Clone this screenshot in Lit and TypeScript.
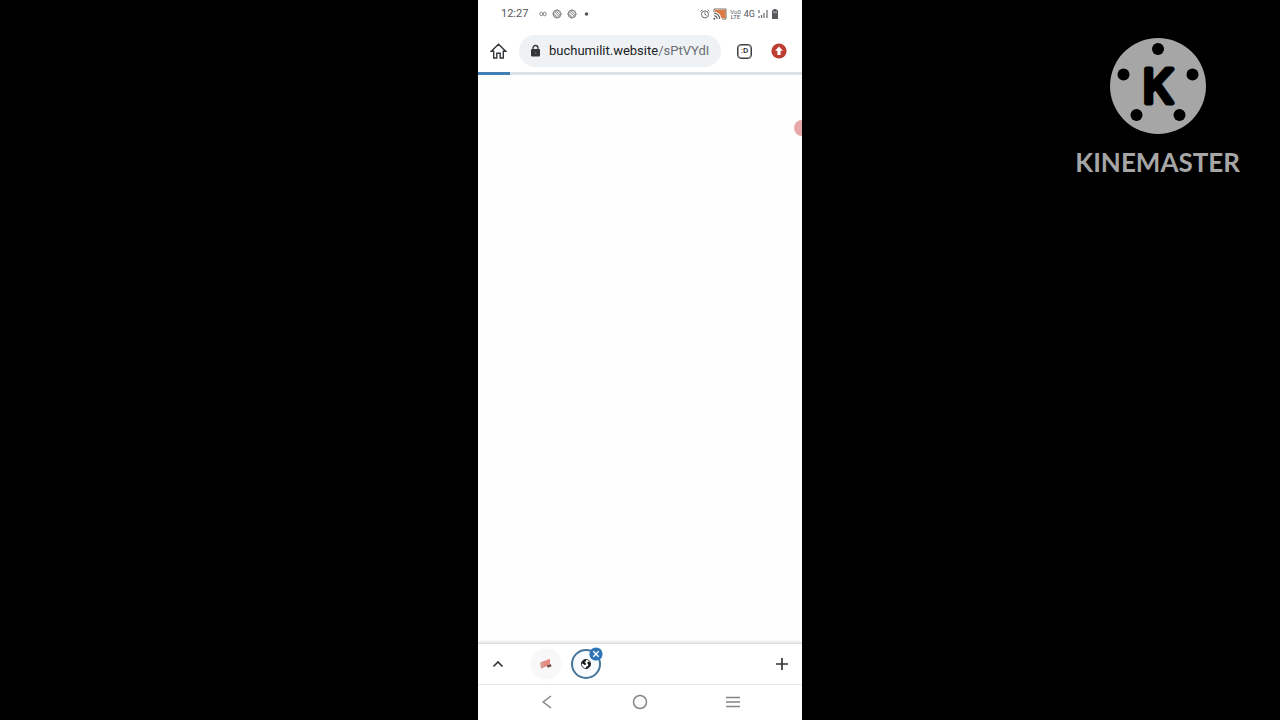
import { LitElement, html, css, svg } from "lit";
import { customElement } from "lit/decorators.js";

@customElement("status-bar")
class StatusBar extends LitElement {
  static styles = css`
    :host {
      display: flex;
      justify-content: space-between;
      align-items: center;
      height: 28px;
      padding: 0 23px;
      color: #55585b;
      font: 11px/14px Roboto, sans-serif;
    }
    .side { display: flex; align-items: center; }
    .left { gap: 5px; }
    .right { gap: 3px; }
    .clock { margin-right: 6px; }
    .volte { font-size: 6px; line-height: 5px; text-align: center; }
    .network { font-size: 9px; }
    svg { display: block; }
  `;

  private leaf() {
    return svg`<svg width="10" height="10" viewBox="0 0 10 10" fill="none" stroke="#77797b">
      <path d="M5 .6L9.400 5 5 9.400.6 5z" stroke-width=".8" stroke-linejoin="round"/>
      <circle cx="5" cy="5" r="4" stroke-width=".8"/>
      <path d="M2.500 2.700l5 5M4 1.800l4.200 4.200M1.600 4.400l4 4" stroke-width=".9"/>
    </svg>`;
  }

  render() {
    return html`
      <div class="side left">
        <span class="clock">12:27</span>
        <svg width="8" height="6" viewBox="0 0 8 6" fill="none" stroke="#85878a">
          <ellipse cx="2.300" cy="3" rx="1.500" ry="1.800"/><ellipse cx="5.700" cy="3" rx="1.500" ry="1.800"/>
        </svg>
        ${this.leaf()}${this.leaf()}
        <svg width="8" height="4" viewBox="0 0 8 4"><circle cx="4.500" cy="2" r="1.800" fill="#55585b"/></svg>
      </div>
      <div class="side right">
        <svg width="10" height="10" viewBox="0 0 10 10" fill="none" stroke="#66696b">
          <circle cx="5" cy="5.400" r="3.500"/><path d="M5 3.400v2.200l1.400.8M.6 2.400L2.400.8M9.400 2.400L7.600.8"/>
        </svg>
        <svg width="14" height="12" viewBox="0 0 14 12">
          <path d="M2 2h10.500v8H8.200C7.800 6.600 6 4.700 2 4z" fill="#e07a45"/>
          <path d="M1 4V1h12v10H9" fill="none" stroke="#806c60" stroke-width="1"/>
          <path d="M1 5.300a5.700 5.700 0 0 1 5.700 5.700M1 7.800A3.200 3.200 0 0 1 4.200 11" fill="none" stroke="#5d5d5d" stroke-width="1.100"/>
          <circle cx="1.300" cy="10.800" r="1" fill="#5d5d5d"/>
        </svg>
        <span class="volte">Vo0<br />LTE</span>
        <span class="network">4G</span>
        <svg width="10" height="10" viewBox="0 0 10 10" fill="none" stroke="#66696b" stroke-width="1.200">
          <path d="M1 1v3M1 7v2M3.500 6v3M6 4v5M9 1v8"/>
        </svg>
        <svg width="8" height="12" viewBox="0 0 8 12"><path d="M2.500 1h3v1.200H7V11H1V2.200h1.500z" fill="#56595b"/><path d="M2 3.400h4v1.800H2z" fill="#9a9c9e"/></svg>
      </div>
    `;
  }
}

@customElement("browser-toolbar")
class BrowserToolbar extends LitElement {
  static styles = css`
    :host {
      display: flex;
      align-items: center;
      height: 42px;
      padding: 2px 10px 0 7px;
    }
    button {
      display: flex;
      align-items: center;
      justify-content: center;
      flex: none;
      width: 27px;
      height: 32px;
      padding: 0;
      border: 0;
      background: none;
      font-family: Roboto, sans-serif;
      color: #202124;
    }
    .address {
      flex: 1;
      min-width: 0;
      justify-content: flex-start;
      gap: 8px;
      margin: 0 10px 0 7px;
      padding: 0 7px 0 11px;
      border-radius: 16px;
      background: #eff2f4;
      font-size: 13px;
      line-height: 20px;
    }
    .address svg { flex: none; }
    .url { flex: 1; min-width: 0; overflow: hidden; white-space: nowrap; text-align: left; }
    .path { color: #6a6e72; }
    .count {
      display: flex;
      align-items: center;
      justify-content: center;
      box-sizing: border-box;
      width: 15px;
      height: 15px;
      border: 1px solid #3c4043;
      box-shadow: inset 0 0 0 1px #9a9c9e;
      border-radius: 4px;
      font-size: 8px;
      line-height: 10px;
      font-weight: 500;
    }
    .update { margin-left: 7px; }
    svg { display: block; }
  `;

  render() {
    return html`
      <button aria-label="Home">
        <svg width="17" height="18" viewBox="0 0 17 18" fill="none" stroke="#34373a" stroke-width="1.400">
          <path d="M1.300 9.200L8.500 2.200l7.200 7H13.300V16H10.200v-4.800H6.800V16H3.700V9.200z"/>
        </svg>
      </button>
      <button class="address" aria-label="Address bar">
        <svg width="11" height="14" viewBox="0 0 11 14">
          <path d="M3 6V4a2.500 2.500 0 0 1 5 0v2" fill="none" stroke="#34373a" stroke-width="1.300"/>
          <rect x="1" y="5" width="9" height="7.500" rx="1" fill="#34373a"/>
          <circle cx="5.500" cy="8.800" r=".9" fill="#5b5f62"/>
        </svg>
        <span class="url">buchumilit.website<span class="path">/sPtVYdI</span></span>
      </button>
      <button aria-label="Open tabs"><span class="count">:D</span></button>
      <button class="update" aria-label="Update available">
        <svg width="16" height="16" viewBox="0 0 16 16">
          <circle cx="8" cy="8" r="7.600" fill="#bd3d32"/>
          <path d="M8 3.500l4 4.200H9.600V12H6.400V7.700H4z" fill="#fff"/>
        </svg>
      </button>
    `;
  }
}

@customElement("tab-strip")
class TabStrip extends LitElement {
  static styles = css`
    :host {
      position: relative;
      display: flex;
      align-items: center;
      height: 40px;
      padding: 0 6px;
      border-top: 1px solid #dcdcdc;
      box-shadow: 0 -1px 3px #dedede;
      background: #fff;
    }
    button {
      display: flex;
      align-items: center;
      justify-content: center;
      width: 28px;
      height: 32px;
      padding: 0;
      border: 0;
      background: none;
    }
    .tab { position: relative; box-sizing: border-box; width: 30px; height: 30px; border-radius: 50%; }
    .idle { margin-left: 19px; background: #f8f8f8; box-shadow: 0 0 3px #f5f5f5; }
    .active { margin-left: 10px; border: 2px solid #45759b; background: #f8fcff; }
    .close { position: absolute; top: -4px; right: -4px; }
    .new { margin-left: auto; }
    svg { display: block; }
  `;

  render() {
    return html`
      <button aria-label="Expand tabs">
        <svg width="12" height="12" viewBox="0 0 12 12" fill="none" stroke="#34373a" stroke-width="1.700"><path d="M1.500 8.500L6 4l4.500 4.500"/></svg>
      </button>
      <button class="tab idle" aria-label="First tab">
        <svg width="14" height="14" viewBox="0 0 14 14">
          <path d="M1.500 5.500L11 1.800v6L2 11.500z" fill="#e58b80"/>
          <path d="M1.500 5.500L5 4.100v6.100L2 11.500z" fill="#d99a90"/>
          <path d="M7.500 8.500l4.500-1.200.5 2-3.500 1.500z" fill="#6d4b4b"/>
        </svg>
      </button>
      <button class="tab active" aria-label="Current tab">
        <svg width="12" height="12" viewBox="0 0 12 12">
          <circle cx="6" cy="6" r="4.600" fill="#fff" stroke="#151515" stroke-width=".8"/>
          <path d="M1.300 5.500C1.800 2.800 4 1.200 6.300 1.400L6 3.200 4.500 4l1.800 2L5 7.200 3 5.800zM7 4.800l1.800-1.300 1.700 1.500C10.900 8 8.500 10.600 5.500 10.600l.8-1.900 1.700-.6L8.300 6.300z" fill="#151515"/>
        </svg>
        <svg class="close" width="14" height="14" viewBox="0 0 14 14">
          <circle cx="7" cy="7" r="6.600" fill="#2f75b5"/>
          <path d="M4.300 4.300l5.400 5.400M9.700 4.300L4.300 9.700" stroke="#fff" stroke-width="1.400"/>
        </svg>
      </button>
      <button class="new" aria-label="New tab">
        <svg width="14" height="14" viewBox="0 0 14 14" stroke="#34373a" stroke-width="1.700"><path d="M7 1v12M1 7h12"/></svg>
      </button>
    `;
  }
}

@customElement("system-nav")
class SystemNav extends LitElement {
  static styles = css`
    :host {
      display: grid;
      grid-template-columns: repeat(3, 93px);
      justify-content: center;
      height: 33px;
      padding-bottom: 2px;
      border-top: 1px solid #e8e8e8;
    }
    button { display: grid; place-items: center; padding: 0; border: 0; background: none; }
    svg { display: block; fill: none; stroke: #858585; stroke-width: 1.500; }
  `;

  render() {
    return html`
      <button aria-label="Back"><svg width="16" height="16" viewBox="0 0 16 16"><path d="M12 2L4.200 8l7.800 6"/></svg></button>
      <button aria-label="Home"><svg width="16" height="16" viewBox="0 0 16 16"><circle cx="8" cy="8" r="6.500"/></svg></button>
      <button aria-label="Recent apps"><svg width="16" height="16" viewBox="0 0 16 16"><path d="M1 3.500h14M1 8h14M1 12.500h14"/></svg></button>
    `;
  }
}

@customElement("app-root")
class AppRoot extends LitElement {
  static styles = css`
    :host {
      display: grid;
      grid-template-columns: 1fr auto 1fr;
      height: 100vh;
      background: #000;
      overflow: hidden;
    }
    .phone {
      grid-column: 2;
      display: flex;
      flex-direction: column;
      height: 100vh;
      aspect-ratio: 9 / 20;
      background: #fff;
      overflow: hidden;
    }
    .progress {
      appearance: none;
      display: block;
      flex: none;
      width: 100%;
      height: 3px;
      border: 0;
      background: #dce2ea;
    }
    .progress::-webkit-progress-bar { background: #dce2ea; }
    .progress::-webkit-progress-value { background: #4180b5; }
    .page { position: relative; flex: 1; background: #fefefe; }
    .bubble {
      position: absolute;
      top: 45px;
      right: -8px;
      width: 16px;
      height: 16px;
      border-radius: 50%;
      background: #e7a9a7;
    }
    .watermark {
      justify-self: end;
      align-self: start;
      display: flex;
      flex-direction: column;
      align-items: center;
      gap: 11px;
      padding: 37px 40px 0 0;
      color: #a6a6a6;
      font: 700 26px/32px Lato, sans-serif;
    }
    .mark { display: block; }
    .mark text { font: 400 46px Inter, sans-serif; fill: #000; stroke: #000; stroke-width: 5px; stroke-linejoin: round; }
  `;

  render() {
    return html`
      <main class="phone">
        <status-bar></status-bar>
        <browser-toolbar></browser-toolbar>
        <progress class="progress" value="10" max="100" aria-label="Page loading"></progress>
        <section class="page"><span class="bubble"></span></section>
        <tab-strip></tab-strip>
        <system-nav></system-nav>
      </main>
      <aside class="watermark">
        <svg class="mark" width="98" height="98" viewBox="0 0 98 98">
          <circle cx="49" cy="49" r="48" fill="#a6a6a6"/>
          <circle cx="49" cy="12" r="6"/><circle cx="14.500" cy="37.500" r="6"/><circle cx="83.500" cy="37.500" r="6"/>
          <circle cx="27.500" cy="78" r="6"/><circle cx="70.500" cy="78" r="6"/>
          <text x="49" y="66" text-anchor="middle">K</text>
        </svg>
        <span>KINEMASTER</span>
      </aside>
    `;
  }
}
